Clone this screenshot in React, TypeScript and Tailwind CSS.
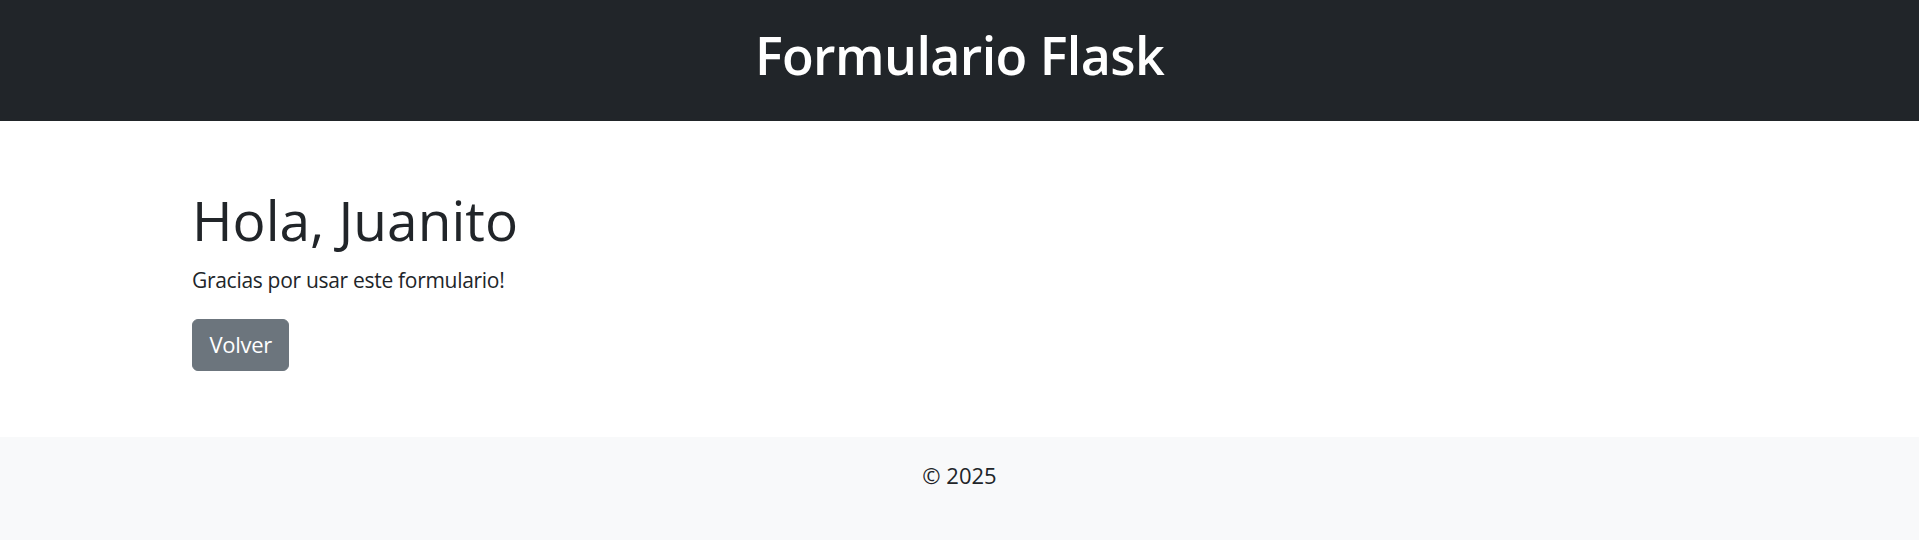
export default function App() {
  return (
    <div
      className="flex min-h-[540px] flex-col bg-white text-[#212529]"
      style={{ fontFamily: '"Open Sans", "Noto Sans", sans-serif' }}
    >
      <header className="bg-[#212529] py-[22px] text-center text-white">
        <h1 className="mb-[11px] text-[52px] font-semibold leading-[66px] tracking-[-0.6px]">Formulario Flask</h1>
      </header>
      <main className="mx-auto w-[1568px] max-w-full px-[16.5px] py-[66px]">
        <h1 className="mb-[11px] text-[55px] font-medium leading-[66px]">Hola, Juanito</h1>
        <p className="mb-[22px] text-[21px] leading-[33px] tracking-[-0.3px]">Gracias por usar este formulario!</p>
        <button className="rounded-[6px] border-[1.375px] border-[#6c757d] bg-[#6c757d] px-[16.5px] py-[8.25px] text-[22px] leading-[33px] tracking-[-0.3px] text-white">
          Volver
        </button>
      </main>
      <footer className="flex-1 bg-[#f8f9fa] pt-[22px] text-center text-[22px] leading-[33px]">
        © 2025
      </footer>
    </div>
  );
}
